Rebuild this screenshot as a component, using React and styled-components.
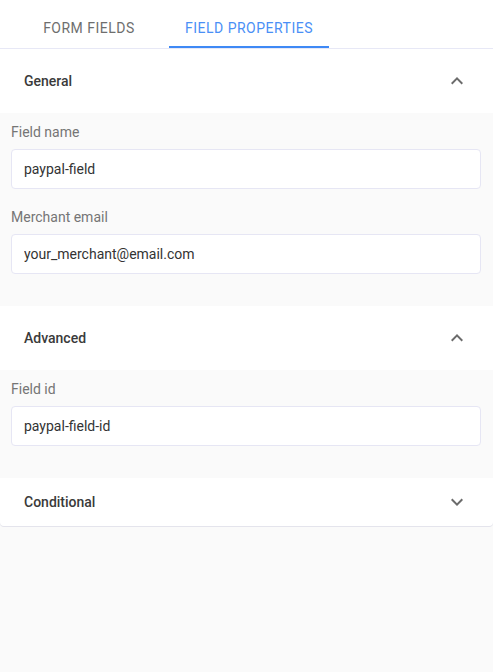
// external dependencies
import React from 'react';
import styled, { createGlobalStyle } from 'styled-components';

// global styles
const GlobalStyle = createGlobalStyle`
    html, body {
        margin: 0;
        padding: 0;
        background-color: #FAFAFA;
        font-family: Roboto, "Liberation Sans", sans-serif;
    }
    * {
        box-sizing: border-box;
    }
`

// styled components
const Wrapper = styled.div`
    display: flex;
    flex-direction: column;
    width: 100%;
    min-height: 672px;
    background-color: #FAFAFA;
`

const TabBar = styled.div`
    display: flex;
    height: 49px;
    padding-left: 9px;
    background-color: #FFFFFF;
    border-bottom: 1px solid #E7E8F6;
`

const Tab = styled.button`
    display: flex;
    align-items: center;
    justify-content: center;
    width: 160px;
    padding: 9px 12px 0 12px;
    border: none;
    border-bottom: 2px solid ${props => props.active ? '#3E89F5' : 'transparent'};
    background: none;
    font-family: inherit;
    font-size: 14px;
    font-weight: 400;
    letter-spacing: 0.5px;
    text-transform: uppercase;
    color: ${props => props.active ? '#4A8FF6' : '#6E6E6E'};
    cursor: pointer;
    outline: none;
`

const Panel = styled.section`
    display: flex;
    flex-direction: column;
    background-color: #FFFFFF;
    border-radius: ${props => props.last ? '0 0 4px 4px' : '0'};
    box-shadow: ${props => props.last ? '0 1px 0 rgba(40, 40, 120, 0.1)' : 'none'};
`

const Summary = styled.div`
    display: flex;
    align-items: center;
    justify-content: space-between;
    height: ${props => props.expanded ? '64px' : '48px'};
    padding: 0 24px;
    cursor: pointer;
`

const Title = styled.span`
    font-size: 14px;
    font-weight: 500;
    color: #3A3A3A;
`

const Chevron = styled.svg`
    width: 24px;
    height: 24px;
    fill: #6B6B6B;
    transform: ${props => props.expanded ? 'rotate(180deg)' : 'none'};
`

const Details = styled.div`
    display: flex;
    flex-direction: column;
    gap: 18px;
    padding: 9px 12px 32px 11px;
    background-color: #FAFAFA;
`

const Field = styled.label`
    display: flex;
    flex-direction: column;
    gap: 7px;
`

const Label = styled.span`
    font-size: 14px;
    line-height: 20px;
    color: #757575;
`

const Input = styled.input`
    height: 40px;
    padding: 0 12px;
    border: 1px solid #E6E6F4;
    border-radius: 4px;
    background-color: #FFFFFF;
    font-family: inherit;
    font-size: 14px;
    color: #333333;
    outline: none;
`

const ExpandIcon = ({ expanded }) => (
    <Chevron viewBox="0 0 24 24" expanded={expanded}>
        <path d="M16.59 8.59L12 13.17 7.41 8.59 6 10l6 6 6-6z" />
    </Chevron>
)

const sections = [
    {
        title: 'General',
        expanded: true,
        fields: [
            { label: 'Field name', value: 'paypal-field' },
            { label: 'Merchant email', value: 'your_merchant@email.com' },
        ],
    },
    {
        title: 'Advanced',
        expanded: true,
        fields: [
            { label: 'Field id', value: 'paypal-field-id' },
        ],
    },
    {
        title: 'Conditional',
        expanded: false,
        fields: [],
    },
]

// component definition
const App = () => {
    return (
        <>
            <GlobalStyle />
            <Wrapper>
                <TabBar>
                    <Tab>Form fields</Tab>
                    <Tab active>Field properties</Tab>
                </TabBar>
                {sections.map((section, i) => (
                    <Panel key={section.title} last={i === sections.length - 1}>
                        <Summary expanded={section.expanded}>
                            <Title>{section.title}</Title>
                            <ExpandIcon expanded={section.expanded} />
                        </Summary>
                        {section.expanded && (
                            <Details>
                                {section.fields.map(field => (
                                    <Field key={field.label}>
                                        <Label>{field.label}</Label>
                                        <Input defaultValue={field.value} />
                                    </Field>
                                ))}
                            </Details>
                        )}
                    </Panel>
                ))}
            </Wrapper>
        </>
    )
}

export default App;
